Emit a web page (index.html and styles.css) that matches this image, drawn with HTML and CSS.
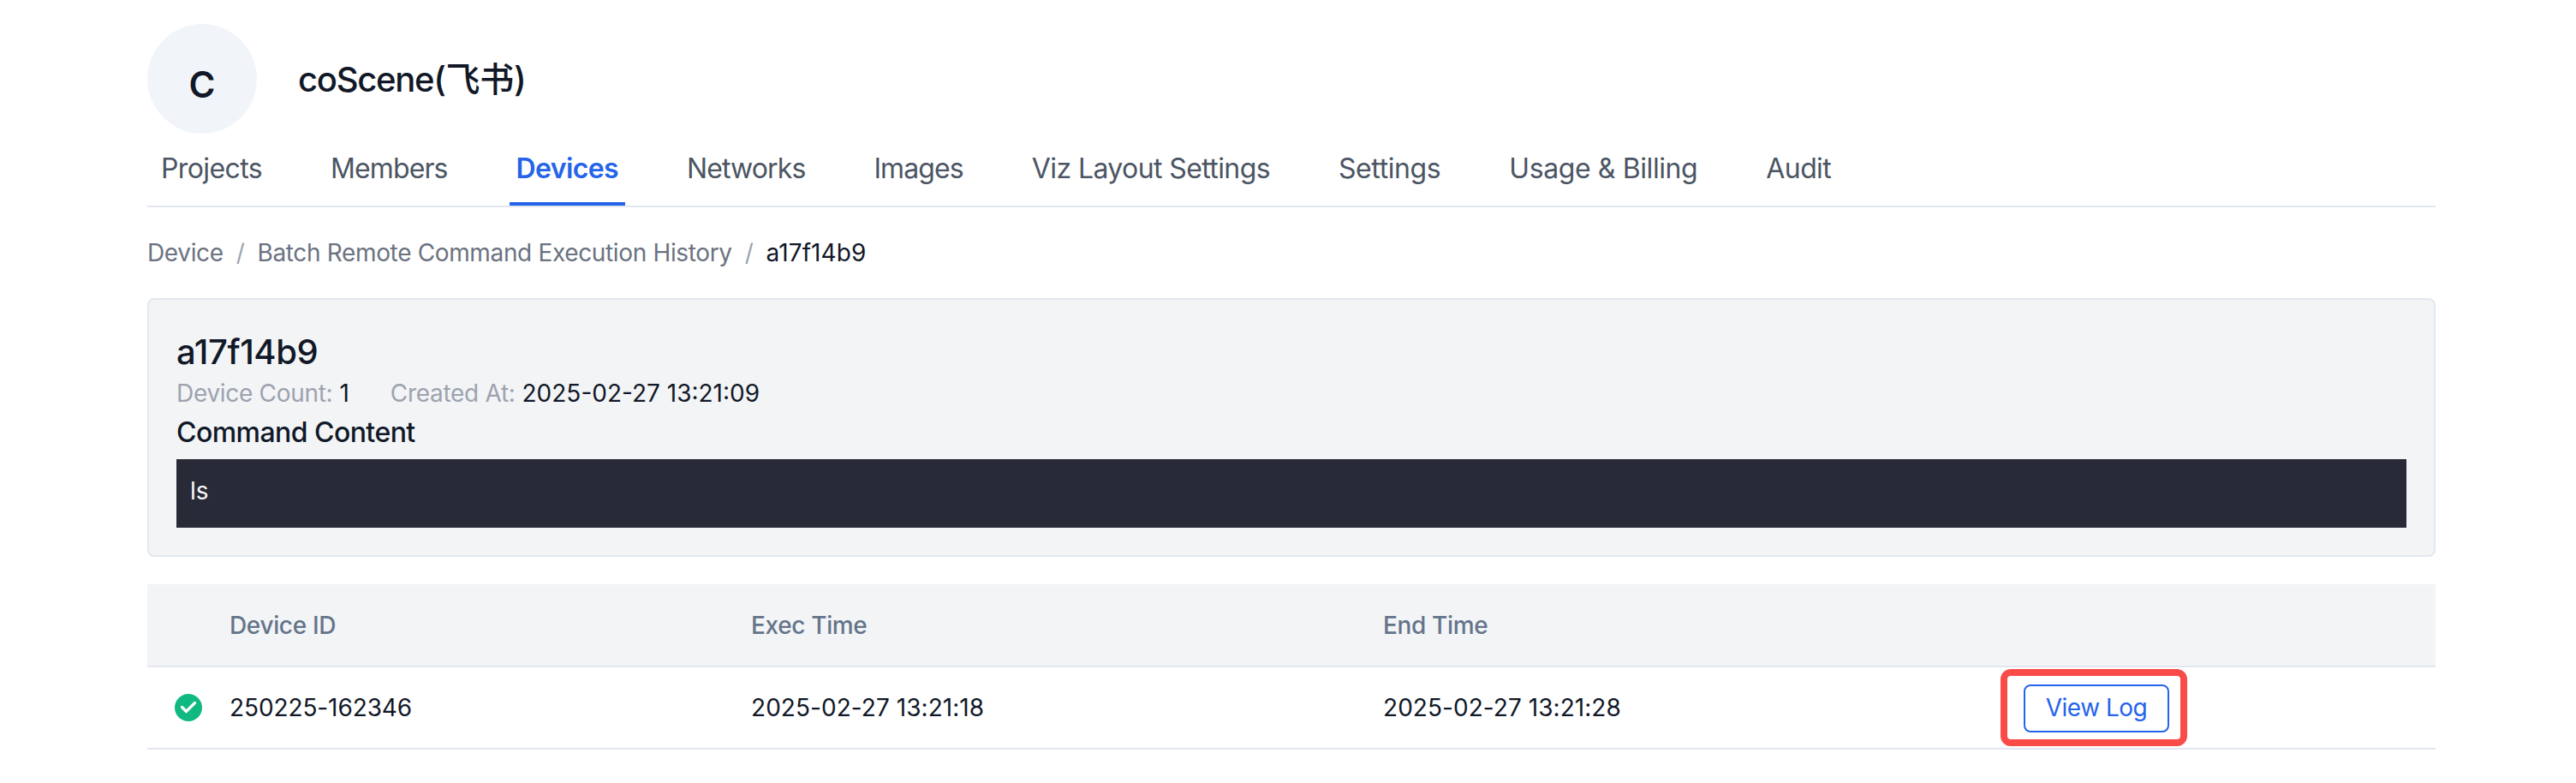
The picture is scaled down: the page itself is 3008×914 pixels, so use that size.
FILE: index.html
```html
<!DOCTYPE html>
<html lang="en">
<head>
<meta charset="utf-8">
<title>coScene</title>
<link rel="stylesheet" href="styles.css">
</head>
<body>
<div class="page">
  <header class="org">
    <div class="avatar">C</div>
    <h1 class="org-name">coScene<span class="cjk">(飞书)</span></h1>
  </header>
  <nav class="tabs">
    <a class="tab">Projects</a>
    <a class="tab tight">Members</a>
    <a class="tab active">Devices</a>
    <a class="tab tight">Networks</a>
    <a class="tab tight">Images</a>
    <a class="tab">Viz Layout Settings</a>
    <a class="tab loose">Settings</a>
    <a class="tab loose">Usage &amp; Billing</a>
    <a class="tab">Audit</a>
  </nav>
  <div class="crumbs">
    <span>Device</span><span class="sep">/</span><span>Batch Remote Command Execution History</span><span class="sep">/</span><span class="current">a17f14b9</span>
  </div>
  <section class="card">
    <h2 class="card-title">a17f14b9</h2>
    <div class="meta">
      <span class="meta-item"><span class="label">Device Count:</span><span class="value">1</span></span>
      <span class="meta-item"><span class="label">Created At:</span><span class="value">2025-02-27 13:21:09</span></span>
    </div>
    <h3 class="card-sub">Command Content</h3>
    <div class="code">ls</div>
  </section>
  <div class="table">
    <div class="row head">
      <span></span><span>Device ID</span><span>Exec Time</span><span>End Time</span><span></span>
    </div>
    <div class="row">
      <span class="status"><svg width="32" height="32" viewBox="0 0 32 32"><circle cx="16" cy="16" r="16" fill="#10b981"/><path d="M8.500 15.500l5 5L23.500 10.500" fill="none" stroke="#fff" stroke-width="3.200" stroke-linecap="round"/></svg></span>
      <span class="device-id">250225-162346</span><span>2025-02-27 13:21:18</span><span>2025-02-27 13:21:28</span>
      <span class="highlight"><button class="btn">View Log</button></span>
    </div>
  </div>
</div>
</body>
</html>
```
FILE: styles.css
```css
* { box-sizing: border-box; }
body { margin: 0; background: #fff; color: #111827; font-family: Inter, "Noto Sans CJK SC", sans-serif; font-size: 28px; }
h1, h2, h3 { margin: 0; font-weight: 550; }
.page { padding: 28px 164px 0 172px; }
.org { display: flex; align-items: center; gap: 48px; height: 128px; }
.avatar { width: 128px; height: 128px; border-radius: 50%; background: #f1f5fa; display: flex; align-items: center; justify-content: center; font-size: 42px; font-weight: 600; line-height: 48px; padding-top: 13px; }
.org-name { font-size: 40px; line-height: 56px; letter-spacing: -1.3px; padding-top: 1px; }
.cjk { letter-spacing: -0.3px; }
.tabs { display: flex; gap: 64px; height: 86px; padding: 0 8px; border-bottom: 2px solid #e2e6f0; font-size: 32px; letter-spacing: -0.6px; color: #4b5563; }
.tab { height: 84px; padding: 17px 8px 0; line-height: 48px; white-space: nowrap; }
.tab.tight { letter-spacing: -0.9px; }
.tab.loose { letter-spacing: -0.4px; }
.tab.active { color: #2563eb; font-weight: 600; border-bottom: 4px solid #2563eb; }
.crumbs { display: flex; gap: 15px; margin-top: 33px; line-height: 40px; color: #6b7280; letter-spacing: -0.35px; }
.sep { color: #9ca3af; }
.current { color: #111827; letter-spacing: 0.1px; }
.card { margin-top: 33px; height: 302px; padding: 33px 32px 32px; border: 2px solid #e2e8f0; border-radius: 8px; background: #f3f4f6; }
.card-title { font-size: 40px; line-height: 56px; letter-spacing: -0.4px; }
.meta { display: flex; gap: 48px; line-height: 40px; letter-spacing: -0.3px; }
.meta-item { display: flex; gap: 8px; }
.label { color: #9ca3af; }
.value { letter-spacing: 0; }
.card-sub { padding-top: 2px; font-size: 32px; line-height: 48px; letter-spacing: -0.55px; }
.code { margin-top: 7px; height: 80px; padding: 17px 16px; line-height: 40px; background: #292a37; color: #f9fafb; }
.table { margin-top: 32px; letter-spacing: 0.05px; }
.device-id { letter-spacing: -0.1px; }
.row { display: grid; grid-template-columns: 96px 609px 738px 721px 1fr; align-items: center; height: 96px; border-bottom: 2px solid #e2e6f0; }
.head { height: 97px; background: #f3f4f6; color: #64748b; font-weight: 500; letter-spacing: -0.35px; }
.status { display: flex; padding-left: 32px; }
.highlight { display: flex; width: 218px; height: 90px; padding: 10px 13px 10px 19px; border: 8px solid #f94b47; border-radius: 12px; }
.btn { width: 170px; height: 56px; padding: 0 0 2px; border: 2px solid #2563eb; border-radius: 8px; background: #fff; color: #2563eb; font: inherit; letter-spacing: -0.5px; line-height: 40px; }
```
